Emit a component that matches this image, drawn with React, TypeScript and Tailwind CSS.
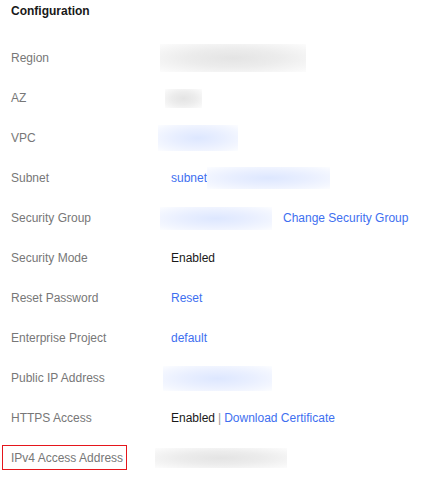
const link = 'text-[#3e6ff0]';

function Blur({ w, h, ml, tone }: { w: number; h: number; ml: number; tone: 'gray' | 'blue' }) {
  const bg =
    tone === 'gray'
      ? 'bg-[radial-gradient(ellipse_at_center,#e4e4e4_0%,#ececec_45%,#f6f6f6_80%,#fcfcfc_100%)]'
      : 'bg-[radial-gradient(ellipse_at_center,#dde7ff_0%,#e9efff_45%,#f4f7ff_80%,#fcfdff_100%)]';
  return <div className={bg} style={{ width: w, height: h, marginLeft: ml }} />;
}

function Row({ label, children, boxed }: { label: string; children?: React.ReactNode; boxed?: boolean }) {
  return (
    <div className="flex h-10 items-center">
      <div className="relative w-[160px] shrink-0 text-[#777]">
        {label}
        {boxed && (
          <span className="absolute left-[-9px] top-[-3px] h-[25px] w-[125px] border border-[#e5161c]" />
        )}
      </div>
      <div className="flex items-center">{children}</div>
    </div>
  );
}

export default function App() {
  return (
    <div
      className="min-h-[482px] w-[425px] bg-white px-[11px] pt-[1px] text-[12px] leading-[20px] text-[#191919]"
      style={{ fontFamily: '"Liberation Sans", Arial, sans-serif' }}
    >
      <h2 className="h-5 font-bold text-[#191919]">Configuration</h2>
      <div className="mt-[17px]">
        <Row label="Region">
          <Blur w={146} h={28} ml={-11} tone="gray" />
        </Row>
        <Row label="AZ">
          <Blur w={37} h={19} ml={-6} tone="gray" />
        </Row>
        <Row label="VPC">
          <Blur w={80} h={26} ml={-13} tone="blue" />
        </Row>
        <Row label="Subnet">
          <span className={link}>subnet</span>
          <Blur w={123} h={22} ml={0} tone="blue" />
        </Row>
        <Row label="Security Group">
          <Blur w={112} h={23} ml={-11} tone="blue" />
          <span className={`${link} ml-[11px]`}>Change Security Group</span>
        </Row>
        <Row label="Security Mode">
          <span>Enabled</span>
        </Row>
        <Row label="Reset Password">
          <span className={link}>Reset</span>
        </Row>
        <Row label="Enterprise Project">
          <span className={link}>default</span>
        </Row>
        <Row label="Public IP Address">
          <Blur w={109} h={25} ml={-8} tone="blue" />
        </Row>
        <Row label="HTTPS Access">
          <span>Enabled</span>
          <span className="mx-[3px] text-[#999]">|</span>
          <span className={link}>Download Certificate</span>
        </Row>
        <Row label="IPv4 Access Address" boxed>
          <Blur w={132} h={20} ml={-16} tone="gray" />
        </Row>
      </div>
    </div>
  );
}
